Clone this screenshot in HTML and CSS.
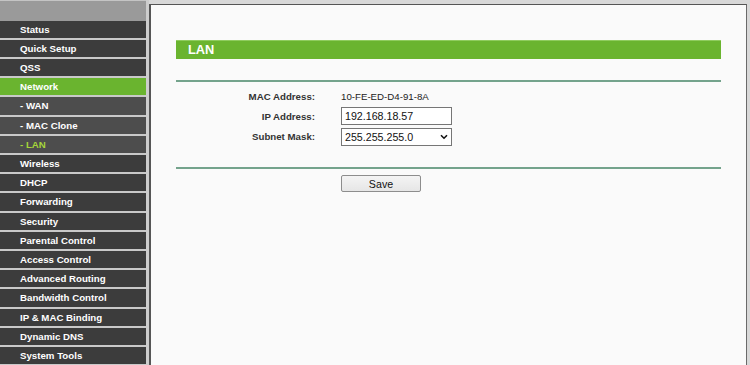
FILE: index.html
```html
<!DOCTYPE html>
<html>
<head>
<meta charset="utf-8">
<link rel="stylesheet" href="styles.css">
</head>
<body>
<div class="page">
  <nav class="sidebar">
    <div class="sidebar-top"></div>
    <div class="nav-item">Status</div>
    <div class="nav-item">Quick Setup</div>
    <div class="nav-item">QSS</div>
    <div class="nav-item active">Network</div>
    <div class="nav-item sub">- WAN</div>
    <div class="nav-item sub">- MAC Clone</div>
    <div class="nav-item sub current">- LAN</div>
    <div class="nav-item">Wireless</div>
    <div class="nav-item">DHCP</div>
    <div class="nav-item">Forwarding</div>
    <div class="nav-item">Security</div>
    <div class="nav-item">Parental Control</div>
    <div class="nav-item">Access Control</div>
    <div class="nav-item">Advanced Routing</div>
    <div class="nav-item">Bandwidth Control</div>
    <div class="nav-item">IP &amp; MAC Binding</div>
    <div class="nav-item">Dynamic DNS</div>
    <div class="nav-item">System Tools</div>
  </nav>
  <div class="divider"></div>
  <main class="frame">
    <div class="title-bar">LAN</div>
    <div class="rule"></div>
    <div class="form">
      <div class="label">MAC Address:</div>
      <div class="value">10-FE-ED-D4-91-8A</div>
      <div class="label">IP Address:</div>
      <div class="value"><input class="text-input" type="text" value="192.168.18.57"></div>
      <div class="label">Subnet Mask:</div>
      <div class="value">
        <span class="select-wrap">
          <select class="select">
            <option>255.255.255.0</option>
          </select>
          <svg class="chevron" width="8" height="6" viewBox="0 0 8 6"><path d="M1 1.2 L4 4.2 L7 1.2" fill="none" stroke="#111" stroke-width="1.6"/></svg>
        </span>
      </div>
    </div>
    <div class="rule rule-bottom"></div>
    <div class="actions">
      <button class="btn" type="button">Save</button>
    </div>
  </main>
</div>
</body>
</html>
```

FILE: styles.css
```css
html, body {
  margin: 0;
  padding: 0;
}
body {
  width: 750px;
  height: 365px;
  overflow: hidden;
  background: #d8d8d8;
  font-family: "Liberation Sans", Arial, sans-serif;
}
.page {
  display: flex;
  height: 365px;
}
.sidebar {
  width: 146px;
  flex: none;
  background: #3d3d3d;
  height: 365px;
  overflow: hidden;
}
.sidebar-top {
  height: 19.7px;
  background: #9a9a9a;
  border-top: 1px solid #c4c4c4;
}
.nav-item {
  height: 17.2px;
  line-height: 17.2px;
  border-bottom: 2px solid #c9c9c9;
  background: #3c3c3c;
  color: #ffffff;
  font-weight: bold;
  font-size: 9.7px;
  padding-left: 20px;
  white-space: nowrap;
}
.nav-item.active {
  background: #6ab42f;
}
.nav-item.sub {
  background: #4d4d4d;
}
.nav-item.current {
  color: #a6d63a;
}
.divider {
  width: 3px;
  flex: none;
  background: #cdcdcd;
}
.frame {
  flex: 1;
  margin-top: 4px;
  margin-right: 3px;
  border-top: 1px solid #555555;
  border-left: 2px solid #555555;
  border-right: 1px solid #6a6a6a;
  background: #fafafa;
  padding: 35px 25px 0 25px;
  height: 325px;
}
.title-bar {
  height: 18.3px;
  line-height: 18.3px;
  background: #6ab42f;
  border-top: 1px solid #8fcc5e;
  color: #ffffff;
  font-weight: bold;
  font-size: 12.8px;
  padding-left: 12px;
}
.rule {
  height: 2px;
  background: #74a38c;
  margin-top: 20.7px;
}
.form {
  display: grid;
  grid-template-columns: 139px 1fr;
  column-gap: 26px;
  grid-auto-rows: 20.3px;
  align-items: center;
  margin-top: 4px;
}
.label {
  text-align: right;
  font-weight: bold;
  font-size: 9.7px;
  color: #333333;
}
.value {
  font-size: 9.7px;
  color: #222222;
}
.text-input {
  box-sizing: border-box;
  width: 111px;
  height: 18px;
  margin: 0;
  border: 1px solid #767676;
  border-radius: 0;
  padding: 0 3px;
  font-family: "Liberation Sans", Arial, sans-serif;
  font-size: 10.67px;
  color: #111111;
  background: #ffffff;
  display: block;
  outline: none;
}
.select-wrap {
  position: relative;
  display: block;
  width: 111px;
  height: 18px;
}
.select {
  -webkit-appearance: none;
  appearance: none;
  box-sizing: border-box;
  width: 111px;
  height: 18px;
  margin: 0;
  border: 1px solid #767676;
  border-radius: 0;
  padding: 0 3px;
  font-family: "Liberation Sans", Arial, sans-serif;
  font-size: 10.67px;
  color: #111111;
  background: #ffffff;
  display: block;
}
.chevron {
  position: absolute;
  right: 4px;
  top: 6px;
  pointer-events: none;
}
.rule-bottom {
  margin-top: 20.5px;
}
.actions {
  padding-left: 165px;
  margin-top: 6px;
}
.btn {
  box-sizing: border-box;
  width: 80px;
  height: 17px;
  margin: 0;
  padding: 0;
  border: 1px solid #8d8d8d;
  border-radius: 2px;
  background: linear-gradient(#f4f4f4, #e6e6e6);
  font-family: "Liberation Sans", Arial, sans-serif;
  font-size: 10.67px;
  color: #111111;
  display: block;
}
```
